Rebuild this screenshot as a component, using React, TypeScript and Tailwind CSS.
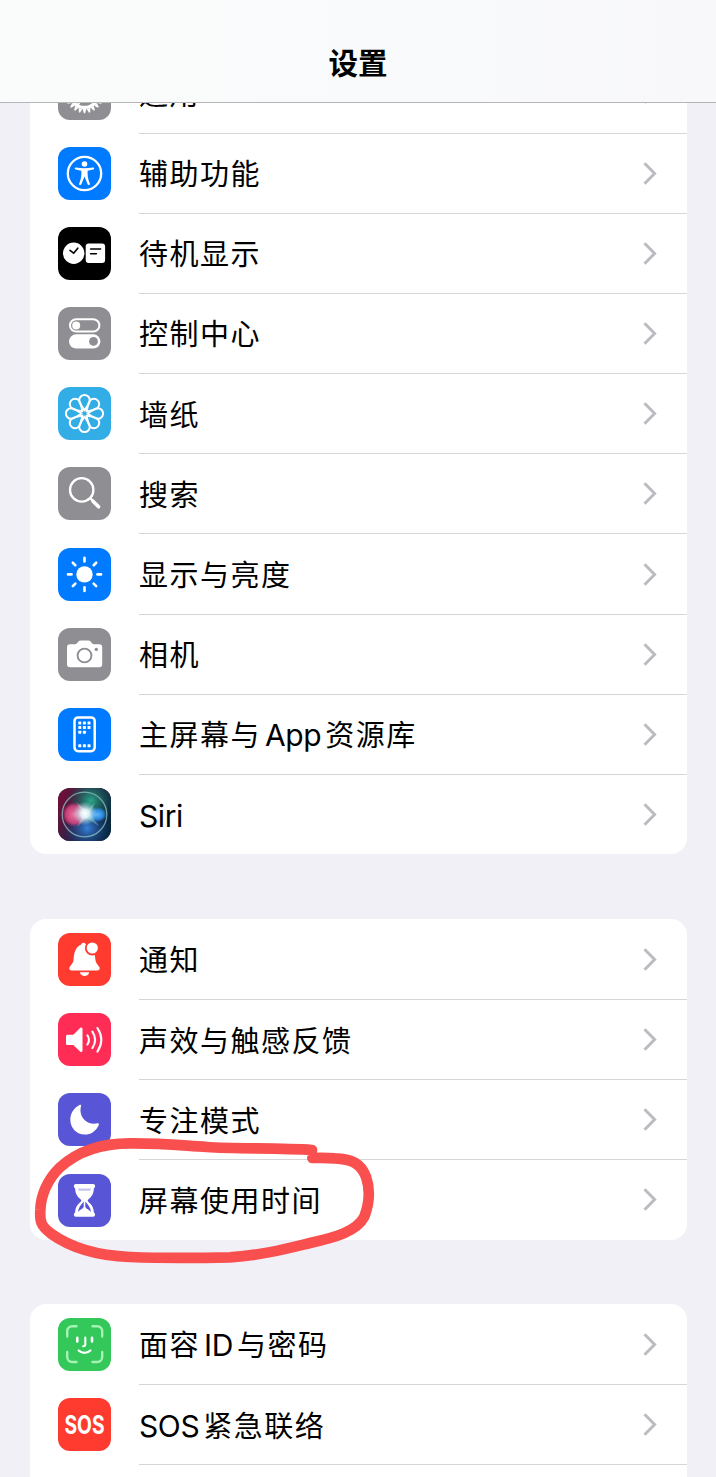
import React from "react";
import clsx from "clsx";

type RowItem = {
  label: React.ReactNode;
  tile: string;
  icon: React.ReactNode;
};

const teeth = Array.from({ length: 24 }, (_, i) => i * 15);

const GeneralIcon = () => (
  <>
    <circle cx="26.5" cy="26.5" r="14" fill="none" stroke="#fff" strokeWidth="3.4" />
    {teeth.map((angle) => (
      <path key={angle} d="M24.6 42L25.9 46.200h1.2L28.4 42z" fill="#fff" transform={`rotate(${angle} 26.5 26.5)`} />
    ))}
    <path d="M26.5 26.5h13M26.5 26.5l-6.5 -11.3M26.5 26.5l-6.5 11.3" stroke="#fff" strokeWidth="2" />
  </>
);

const AccessibilityIcon = () => (
  <>
    <circle cx="26.5" cy="26.5" r="16.7" fill="none" stroke="#fff" strokeWidth="2.3" />
    <circle cx="26.5" cy="17" r="2.8" fill="#fff" />
    <path
      d="M18 20.6c5.5 1 11.5 1 17 0c1.4-.2 1.7 1.6.4 1.9l-5.7 1.2c-.5 4 .3 8.5 2.1 12.8c.5 1.5-1.5 2.3-2.2.8l-3.1-7.8l-3.1 7.8c-.7 1.5-2.7.7-2.2-.8c1.8-4.3 2.6-8.8 2.1-12.8l-5.7-1.2c-1.3-.3-1-2.1.4-1.9z"
      fill="#fff"
    />
  </>
);

const StandbyIcon = () => (
  <>
    <circle cx="15.7" cy="26.3" r="10.7" fill="#fff" />
    <rect x="27.7" y="16.5" width="19.4" height="19.6" rx="3" fill="#fff" />
    <path
      d="M12 23.3l3.6 2.9l4.2-5M32.6 22h10M32.6 26.7h5.8"
      fill="none"
      stroke="#000"
      strokeWidth="1.6"
      strokeLinecap="round"
      strokeLinejoin="round"
    />
  </>
);

const ControlCenterIcon = () => (
  <>
    <rect x="12" y="12.2" width="29.4" height="12.4" rx="6.2" fill="none" stroke="#fff" strokeWidth="2" />
    <circle cx="18.2" cy="18.4" r="4" fill="#fff" />
    <rect x="11" y="27.3" width="31.4" height="14.2" rx="7.1" fill="#fff" />
    <circle cx="35.5" cy="34.4" r="4.4" fill="#8e8e93" />
  </>
);

const WallpaperIcon = () => (
  <g fill="none" stroke="#fff" strokeWidth="2" strokeLinejoin="round">
    {[0, 45, 90, 135, 180, 225, 270, 315].map((angle) => (
      <path
        key={angle}
        d="M26.5 23.5C24.5 20 21.2 16.8 21.2 13.2A5.3 5.3 0 0 1 31.8 13.2C31.8 16.8 28.5 20 26.5 23.5z"
        transform={`rotate(${angle} 26.5 26.5)`}
      />
    ))}
  </g>
);

const SearchIcon = () => (
  <g fill="none" stroke="#fff" strokeLinecap="round">
    <circle cx="23.7" cy="22.9" r="11.7" strokeWidth="2.3" />
    <path d="M32.4 31.4l3 3" strokeWidth="2.3" />
    <path d="M35 34.2l5.6 5.6" strokeWidth="3.6" />
  </g>
);

const BrightnessIcon = () => (
  <>
    <circle cx="26.5" cy="26.4" r="8.2" fill="#fff" />
    {[0, 45, 90, 135, 180, 225, 270, 315].map((angle) => (
      <path
        key={angle}
        d="M26.5 13.4v-3.5"
        stroke="#fff"
        strokeWidth="2.6"
        strokeLinecap="round"
        transform={`rotate(${angle} 26.5 26.4)`}
      />
    ))}
  </>
);

const CameraIcon = () => (
  <>
    <path
      d="M12 16.2h5.2c2.6 0 2.6-3.6 5.4-3.6h7.9c2.8 0 2.8 3.6 5.4 3.6h5.3a3 3 0 0 1 3 3v17a3 3 0 0 1-3 3H12a3 3 0 0 1-3-3v-17a3 3 0 0 1 3-3z"
      fill="#fff"
    />
    <circle cx="26.5" cy="27.5" r="6.9" fill="none" stroke="#8e8e93" strokeWidth="1.9" />
    <circle cx="38.3" cy="21.4" r="1.7" fill="#8e8e93" />
  </>
);

const dots = [
  [21.8, 15], [26.4, 15], [31, 15],
  [21.8, 19.6], [26.4, 19.6], [31, 19.6],
  [21.8, 24.2], [26.4, 24.2],
  [21.8, 37.7], [26.4, 37.7], [31, 37.7],
];

const HomeScreenIcon = () => (
  <>
    <rect x="16.5" y="9.4" width="20.2" height="33.8" rx="3.6" fill="none" stroke="#fff" strokeWidth="2.5" />
    {dots.map(([x, y]) => (
      <rect key={`${x}-${y}`} x={x - 1.5} y={y - 1.5} width="3" height="3" rx=".5" fill="#fff" />
    ))}
  </>
);

const SiriIcon = () => (
  <>
    <defs>
      <linearGradient id="siri-bg" x1="0" y1=".3" x2="1" y2=".7">
        <stop offset="0" stopColor="#6e0f38" />
        <stop offset=".45" stopColor="#2b2448" />
        <stop offset="1" stopColor="#06283f" />
      </linearGradient>
      <radialGradient id="siri-green" cx=".62" cy=".24" r=".45">
        <stop offset="0" stopColor="#2ba88a" />
        <stop offset="1" stopColor="#0d5a4c" stopOpacity="0" />
      </radialGradient>
      <radialGradient id="siri-blue" cx=".55" cy=".76" r=".44">
        <stop offset="0" stopColor="#3583dc" />
        <stop offset="1" stopColor="#153b80" stopOpacity="0" />
      </radialGradient>
      <radialGradient id="siri-pink">
        <stop offset="0" stopColor="#f278a8" />
        <stop offset=".7" stopColor="#d8457e" stopOpacity=".85" />
        <stop offset="1" stopColor="#c02d65" stopOpacity="0" />
      </radialGradient>
      <radialGradient id="siri-sky">
        <stop offset="0" stopColor="#5cb4fa" />
        <stop offset=".6" stopColor="#2f8fe8" stopOpacity=".9" />
        <stop offset="1" stopColor="#2f8fe8" stopOpacity="0" />
      </radialGradient>
      <radialGradient id="siri-core">
        <stop offset="0" stopColor="#fff" />
        <stop offset=".35" stopColor="#eafcff" stopOpacity=".9" />
        <stop offset="1" stopColor="#9fe6f0" stopOpacity="0" />
      </radialGradient>
    </defs>
    <rect width="53" height="53" fill="url(#siri-bg)" />
    <rect width="53" height="53" fill="url(#siri-green)" />
    <rect width="53" height="53" fill="url(#siri-blue)" />
    <circle cx="16.5" cy="26.5" r="12.5" fill="url(#siri-pink)" />
    <ellipse cx="39.5" cy="26.5" rx="9.5" ry="7.5" fill="url(#siri-sky)" />
    <path d="M26 26l-8-12l11 9l8-9l-5 12l9 12l-13-8l-9 9z" fill="#a8f0e8" opacity=".35" />
    <circle cx="27" cy="25.5" r="12" fill="url(#siri-core)" />
    <circle cx="26.5" cy="26.5" r="22.3" fill="none" stroke="#8fc5c4" strokeWidth="1.3" opacity=".75" />
  </>
);

const BellIcon = () => (
  <>
    <path
      d="M23.2 11.5c.8-2 3.2-2.1 4.2-.8c1.5.5 3 1.2 4.2 2.3c3.6 3.5 5.6 8 5.8 13.6c.1 3 1.8 4.7 3.6 6.9c1.3 1.7.7 3.9-1.5 3.9h-26c-2.2 0-2.8-2.2-1.5-3.9c1.8-2.2 3.5-3.9 3.6-6.9c.2-7 2.4-13.1 7.6-15.1z"
      fill="#fff"
    />
    <circle cx="34.3" cy="15" r="7.4" fill="#ff3b30" />
    <circle cx="34.3" cy="15" r="5.6" fill="#fff" />
    <path d="M22 39.2h9.2c-.6 5-8.6 5-9.2 0z" fill="#fff" />
  </>
);

const SoundIcon = () => (
  <>
    <path
      d="M9.7 21.8h5.6l6.8-6.7c1-1 2.4-.5 2.4 1v21.5c0 1.5-1.4 2-2.4 1l-6.8-6.5H9.7c-1 0-1.7-.7-1.7-1.7v-6.9c0-1 .7-1.7 1.7-1.7z"
      fill="#fff"
    />
    <path
      d="M29.4 22.3q3 4.6 0 9.2M34.4 18.6q5.4 8.2 0 16.4M39.4 15q7.8 11.8 0 23.6"
      fill="none"
      stroke="#fff"
      strokeWidth="2.1"
      strokeLinecap="round"
    />
  </>
);

const MoonIcon = () => (
  <path
    d="M21.5 11.9c.9-.6 2 .1 1.6 1.2c-1.4 4.8-.3 10.2 3.2 13.7c3.5 3.6 8.5 4.7 13.2 3.5c1.2-.3 1.8.6 1.3 1.6c-2.5 5.8-7.7 9.7-14 9.7c-8.2 0-14.5-6.5-14.5-14.8c0-6.6 3.7-12.2 9.2-14.9z"
    fill="#fff"
  />
);

const HourglassIcon = () => (
  <>
    <path
      d="M17.8 10h17.4c2.4 0 2.4 3.6.7 4.3c-.3 5.7-2 8-5.6 11.2c-.8.7-.8 1.5 0 2.2c3.6 3.2 5.3 5.4 5.6 10.9c1.7.7 1.7 4.2-.7 4.2H17.8c-2.4 0-2.4-3.5-.7-4.2c.3-5.5 2-7.7 5.6-10.9c.8-.7.8-1.5 0-2.2c-3.6-3.2-5.3-5.5-5.6-11.2c-1.7-.7-1.7-4.3.7-4.3z"
      fill="#fff"
    />
    {/* empty space above and beside the falling sand */}
    <path d="M20 14.6h13l-.7 2.2H20.7z" fill="#5856d6" opacity=".35" />
    <path
      d="M25.7 27.6v5.3c-1.2 2.2-4.5 3-5.7 5.2c.4-4.3 2.2-6.2 5.7-10.5zM27.3 27.6v5.3c1.2 2.2 4.5 3 5.7 5.2c-.4-4.3-2.2-6.2-5.7-10.5z"
      fill="#5856d6"
    />
  </>
);

const FaceIdIcon = () => (
  <g fill="none" strokeLinecap="round" strokeWidth="2.4">
    <path
      d="M9.2 18.5v-5.3a5 5 0 0 1 5-5h4.3M34.5 8.2h4.7a5 5 0 0 1 5 5v5.3M44.2 34v5a5 5 0 0 1-5 5h-4.7M18.5 44h-4.3a5 5 0 0 1-5-5v-5"
      stroke="#a4f2b4"
    />
    <path d="M19.3 19.9v3.6M34 19.9v3.6" stroke="#fff" strokeWidth="2.6" />
    <path d="M27.3 19.5v6.8c0 1.3-.7 1.9-2.2 1.9" stroke="#fff" strokeWidth="2.1" />
    <path d="M20.7 32.5c3.3 3.2 8.3 3.2 11.6 0" stroke="#fff" />
  </g>
);

const SosIcon = () => (
  <text
    textAnchor="middle"
    transform="translate(26.5 35.7) scale(.77 1)"
    fill="#fff"
    className="font-['Inter'] text-[25px] font-bold"
  >
    SOS
  </text>
);

const Latin = ({ children, className }: { children: React.ReactNode; className?: string }) => (
  <span className={clsx("font-['Inter'] text-[30px] leading-none tracking-[-0.4px]", className)}>{children}</span>
);

const general: RowItem[] = [
  { label: "通用", tile: "bg-[#8e8e93]", icon: <GeneralIcon /> },
  { label: "辅助功能", tile: "bg-[#007aff]", icon: <AccessibilityIcon /> },
  { label: "待机显示", tile: "bg-black", icon: <StandbyIcon /> },
  { label: "控制中心", tile: "bg-[#8e8e93]", icon: <ControlCenterIcon /> },
  { label: "墙纸", tile: "bg-[#32ade6]", icon: <WallpaperIcon /> },
  { label: "搜索", tile: "bg-[#8e8e93]", icon: <SearchIcon /> },
  { label: "显示与亮度", tile: "bg-[#007aff]", icon: <BrightnessIcon /> },
  { label: "相机", tile: "bg-[#8e8e93]", icon: <CameraIcon /> },
  {
    label: <>主屏幕与<Latin className="mx-[4px]">App</Latin>资源库</>,
    tile: "bg-[#007aff]",
    icon: <HomeScreenIcon />,
  },
  { label: <Latin>Siri</Latin>, tile: "bg-[#2b2448]", icon: <SiriIcon /> },
];

const alerts: RowItem[] = [
  { label: "通知", tile: "bg-[#ff3b30]", icon: <BellIcon /> },
  { label: "声效与触感反馈", tile: "bg-[#ff2d55]", icon: <SoundIcon /> },
  { label: "专注模式", tile: "bg-[#5856d6]", icon: <MoonIcon /> },
  { label: "屏幕使用时间", tile: "bg-[#5856d6]", icon: <HourglassIcon /> },
];

const security: RowItem[] = [
  {
    label: <>面容<Latin className="mx-[4px]">ID</Latin>与密码</>,
    tile: "bg-[#34c759]",
    icon: <FaceIdIcon />,
  },
  {
    label: <><Latin className="mr-[4px]">SOS</Latin>紧急联络</>,
    tile: "bg-[#ff3b30]",
    icon: <SosIcon />,
  },
  { label: "", tile: "bg-[#34c759]", icon: null },
];

const Row = ({ item, first }: { item: RowItem; first: boolean }) => (
  <li className="flex h-[80.2px] pl-[27.5px]">
    <div className={clsx("mt-[14.2px] size-[53px] shrink-0 overflow-hidden rounded-[12px]", item.tile)}>
      <svg viewBox="0 0 53 53" className="size-full">
        {item.icon}
      </svg>
    </div>
    <div
      className={clsx(
        "ml-[28.5px] flex flex-1 items-center justify-between border-t pr-[30px]",
        first ? "border-transparent" : "border-[#d6d6d9]"
      )}
    >
      <span className="mb-[2px] h-[44px] text-[29px] leading-[44px] tracking-[1.5px] whitespace-nowrap text-black">
        {item.label}
      </span>
      <svg viewBox="0 0 15 25" className="h-[25px] w-[15px]" fill="none" stroke="#bcbcc0" strokeWidth="3">
        <path d="M2.5 2.2L12.6 12.5L2.5 22.8" />
      </svg>
    </div>
  </li>
);

const Group = ({ items, className }: { items: RowItem[]; className?: string }) => (
  <ul className={clsx("mr-[29px] ml-[30px] overflow-hidden rounded-[16px] bg-white", className)}>
    {items.map((item, i) => (
      <Row key={i} item={item} first={i === 0} />
    ))}
  </ul>
);

const App: React.FC = () => (
  <div className="relative h-[1477px] w-[716px] overflow-hidden bg-[#f1f0f7] font-['Noto_Sans_CJK_SC',sans-serif]">
    <header className="relative z-10 flex h-[103px] items-end justify-center border-b border-[#b5b5b7] bg-gradient-to-r from-[#fafcfb] to-[#f8f8fb] pb-[19px]">
      <h1 className="text-[29.5px] leading-[44px] font-bold text-black">设置</h1>
    </header>

    <Group items={general} className="mt-[-50.7px]" />
    <Group items={alerts} className="mt-[64.6px]" />
    <Group items={security} className="mt-[64.2px]" />

    {/* hand-drawn marker around the screen time row */}
    <svg viewBox="0 0 1140 480" className="absolute top-[1120px] left-[20px] h-[160px] w-[380px]">
      <path
        d="M876 90C780 83 650 87 560 81C480 76 420 69 330 70C245 70 175 92 120 142C80 180 62 230 61 270C59 305 63 318 92 340C150 382 235 407 330 411C430 415 540 414 630 412C730 405 800 386 870 369C945 352 1010 335 1033 290C1048 250 1050 205 1038 170C1022 130 995 117 945 115C920 113 900 113 877 114"
        fill="none"
        stroke="#f9504f"
        strokeWidth="32"
        strokeLinecap="round"
        strokeLinejoin="round"
      />
    </svg>
  </div>
);

export default App;
